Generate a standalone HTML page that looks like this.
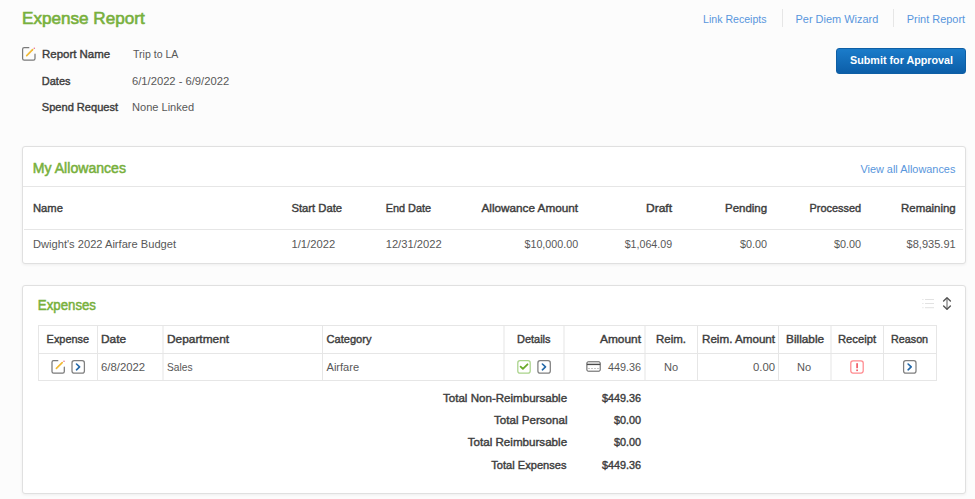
<!DOCTYPE html>
<html><head><meta charset="utf-8">
<style>
html,body{margin:0;padding:0;}
body{width:975px;height:499px;background:#fcfcfc;position:relative;overflow:hidden;font-family:"Liberation Sans",sans-serif;}
.card{position:absolute;background:#fff;border:1px solid #e0e0e0;border-radius:3px;box-shadow:0 1px 3px rgba(0,0,0,0.06);box-sizing:border-box;}
.btn{position:absolute;left:836px;top:48px;width:130px;height:26px;border-radius:3px;background:linear-gradient(#1b7cca,#0c5ea8);box-sizing:border-box;border:1px solid #0e5fa5;}
svg.ov{position:absolute;left:0;top:0;}
svg text{font-family:"Liberation Sans",sans-serif;}
</style></head>
<body>
<div class="card" style="left:22px;top:146px;width:944px;height:118px;"></div>
<div class="card" style="left:22px;top:285px;width:944px;height:209px;"></div>
<div class="btn"></div>
<svg class="ov" width="975" height="499" viewBox="0 0 975 499">
<!-- separators top links -->
<rect x="782" y="9" width="1" height="18" fill="#e6e6e6"/>
<rect x="893" y="9" width="1" height="18" fill="#e6e6e6"/>
<!-- allowances card lines -->
<rect x="23" y="186" width="942" height="1" fill="#e6e6e6"/>
<rect x="24" y="229" width="939" height="1" fill="#e6e6e6"/>
<!-- expenses table -->
<g fill="#e6e6e6">
<rect x="38" y="325" width="899" height="1"/>
<rect x="38" y="353" width="899" height="1"/>
<rect x="38" y="380" width="899" height="1"/>
<rect x="38" y="325" width="1" height="56"/>
<rect x="97" y="325" width="1" height="56"/>
<rect x="162.5" y="325" width="1" height="56"/>
<rect x="322" y="325" width="1" height="56"/>
<rect x="503.5" y="325" width="1" height="56"/>
<rect x="563.5" y="325" width="1" height="56"/>
<rect x="644.5" y="325" width="1" height="56"/>
<rect x="697" y="325" width="1" height="56"/>
<rect x="778" y="325" width="1" height="56"/>
<rect x="830.5" y="325" width="1" height="56"/>
<rect x="883" y="325" width="1" height="56"/>
<rect x="936" y="325" width="1" height="56"/>
</g>

<!-- edit icon top -->
<g fill="none" stroke-linecap="round">
<path d="M28.8 47.7 H24.2 Q22.6 47.7 22.6 49.3 V58.5 Q22.6 60.1 24.2 60.1 H33.4 Q35 60.1 35 58.5 V54.2" stroke="#7a7a7a" stroke-width="1.25"/>
<path d="M26.7 55.6 L32.6 49.7" stroke="#f0b935" stroke-width="1.65"/>
<circle cx="34.3" cy="48.2" r="0.8" fill="#e8708a" stroke="none"/>
</g>
<!-- edit icon row -->
<g fill="none" stroke-linecap="round">
<path d="M57.8 360.7 H53.6 Q52 360.7 52 362.3 V371.5 Q52 373.1 53.6 373.1 H62.7 Q64.3 373.1 64.3 371.5 V367.2" stroke="#7a7a7a" stroke-width="1.25"/>
<path d="M56.4 368.4 L62.2 362.7" stroke="#f0b935" stroke-width="1.65"/>
<circle cx="64" cy="361.2" r="0.8" fill="#e8708a" stroke="none"/>
</g>
<!-- arrow boxes -->
<g fill="none">
<rect x="72" y="360.7" width="12.4" height="12.4" rx="2.2" stroke="#7f7f7f" stroke-width="1.25"/>
<path d="M76.5 364 L79.6 366.9 L76.5 369.8" stroke="#2468a8" stroke-width="1.65" stroke-linecap="round" stroke-linejoin="round"/>
<rect x="537.9" y="360.7" width="12.4" height="12.4" rx="2.2" stroke="#7f7f7f" stroke-width="1.25"/>
<path d="M542.4 364 L545.5 366.9 L542.4 369.8" stroke="#2468a8" stroke-width="1.65" stroke-linecap="round" stroke-linejoin="round"/>
<rect x="903.6" y="360.7" width="12.4" height="12.4" rx="2.2" stroke="#7f7f7f" stroke-width="1.25"/>
<path d="M908.1 364 L911.2 366.9 L908.1 369.8" stroke="#2468a8" stroke-width="1.65" stroke-linecap="round" stroke-linejoin="round"/>
</g>
<!-- checkbox -->
<rect x="517.8" y="360.7" width="12.4" height="12.4" rx="2.2" fill="none" stroke="#a9d38a" stroke-width="1.25"/>
<path d="M520.6 366.6 L522.9 368.9 L527.5 364.3" fill="none" stroke="#6aab2a" stroke-width="1.8" stroke-linecap="round" stroke-linejoin="round"/>
<!-- card icon -->
<rect x="586.9" y="361.8" width="13.3" height="9.4" rx="1.2" fill="none" stroke="#5a5a5a" stroke-width="1"/>
<rect x="586.9" y="363.7" width="13.3" height="1.4" fill="#4a4a4a"/>
<g fill="#8a8a8a"><rect x="588.5" y="368" width="1" height="1"/><rect x="591.5" y="368" width="1" height="1"/><rect x="594.5" y="368" width="1" height="1"/><rect x="597.5" y="368" width="1" height="1"/></g>
<!-- receipt -->
<rect x="850.8" y="360.8" width="12.4" height="12.2" rx="2.2" fill="none" stroke="#ff8a8f" stroke-width="1.25"/>
<rect x="856.3" y="363.2" width="1.6" height="5" fill="#f0505c"/>
<rect x="856.3" y="369.5" width="1.6" height="1.6" fill="#f0505c"/>
<!-- list icon -->
<g fill="#e2e2e2">
<rect x="922.3" y="299" width="1.2" height="1"/><rect x="925" y="299" width="9" height="1"/>
<rect x="922.3" y="303" width="1.2" height="1"/><rect x="925" y="303" width="9" height="1"/>
<rect x="922.3" y="307.2" width="1.2" height="1"/><rect x="925" y="307.2" width="9" height="1"/>
</g>
<!-- sort icon -->
<g fill="none" stroke="#555" stroke-linecap="round" stroke-linejoin="round">
<path d="M947 298.3 V309" stroke-width="1.1" stroke="#6a6a6a"/>
<path d="M943.6 301 L947 297.8 L950.4 301" stroke-width="1.4"/>
<path d="M943.6 306 L947 309.3 L950.4 306" stroke-width="1.4"/>
</g>
<text x="21.99" y="24.00" font-size="17" fill="#78b03c" stroke="#78b03c" stroke-width="0.62" textLength="122.73" lengthAdjust="spacingAndGlyphs">Expense Report</text>
<text x="703.00" y="23.00" font-size="11.2" fill="#5896dc" textLength="63.62" lengthAdjust="spacingAndGlyphs">Link Receipts</text>
<text x="795.50" y="23.00" font-size="11.2" fill="#5896dc" textLength="82.72" lengthAdjust="spacingAndGlyphs">Per Diem Wizard</text>
<text x="906.70" y="23.00" font-size="11.2" fill="#5896dc" textLength="58.43" lengthAdjust="spacingAndGlyphs">Print Report</text>
<text x="850.00" y="64.00" font-size="11.2" fill="#ffffff" font-weight="bold" textLength="103.10" lengthAdjust="spacingAndGlyphs">Submit for Approval</text>
<text x="42.00" y="57.60" font-size="11" fill="#3d3d3d" stroke="#3d3d3d" stroke-width="0.40" textLength="68.12" lengthAdjust="spacingAndGlyphs">Report Name</text>
<text x="133.00" y="57.60" font-size="11" fill="#585858" textLength="45.36" lengthAdjust="spacingAndGlyphs">Trip to LA</text>
<text x="41.80" y="84.60" font-size="11" fill="#3d3d3d" stroke="#3d3d3d" stroke-width="0.40" textLength="28.70" lengthAdjust="spacingAndGlyphs">Dates</text>
<text x="132.00" y="84.60" font-size="11" fill="#585858" textLength="97.12" lengthAdjust="spacingAndGlyphs">6/1/2022 - 6/9/2022</text>
<text x="41.80" y="111.00" font-size="11" fill="#3d3d3d" stroke="#3d3d3d" stroke-width="0.40" textLength="76.26" lengthAdjust="spacingAndGlyphs">Spend Request</text>
<text x="132.00" y="111.00" font-size="11" fill="#585858" textLength="62.12" lengthAdjust="spacingAndGlyphs">None Linked</text>
<text x="32.80" y="173.00" font-size="14" fill="#78b03c" stroke="#78b03c" stroke-width="0.51" textLength="93.20" lengthAdjust="spacingAndGlyphs">My Allowances</text>
<text x="860.40" y="172.60" font-size="11.2" fill="#5896dc" textLength="95.01" lengthAdjust="spacingAndGlyphs">View all Allowances</text>
<text x="33.00" y="212.00" font-size="11" fill="#3d3d3d" stroke="#3d3d3d" stroke-width="0.40" textLength="29.92" lengthAdjust="spacingAndGlyphs">Name</text>
<text x="291.50" y="212.00" font-size="11" fill="#3d3d3d" stroke="#3d3d3d" stroke-width="0.40" textLength="50.62" lengthAdjust="spacingAndGlyphs">Start Date</text>
<text x="385.70" y="212.00" font-size="11" fill="#3d3d3d" stroke="#3d3d3d" stroke-width="0.40" textLength="45.42" lengthAdjust="spacingAndGlyphs">End Date</text>
<text x="481.50" y="212.00" font-size="11" fill="#3d3d3d" stroke="#3d3d3d" stroke-width="0.40" textLength="96.56" lengthAdjust="spacingAndGlyphs">Allowance Amount</text>
<text x="646.00" y="212.00" font-size="11" fill="#3d3d3d" stroke="#3d3d3d" stroke-width="0.40" textLength="26.06" lengthAdjust="spacingAndGlyphs">Draft</text>
<text x="725.00" y="212.00" font-size="11" fill="#3d3d3d" stroke="#3d3d3d" stroke-width="0.40" textLength="42.12" lengthAdjust="spacingAndGlyphs">Pending</text>
<text x="809.50" y="212.00" font-size="11" fill="#3d3d3d" stroke="#3d3d3d" stroke-width="0.40" textLength="51.62" lengthAdjust="spacingAndGlyphs">Processed</text>
<text x="901.00" y="212.00" font-size="11" fill="#3d3d3d" stroke="#3d3d3d" stroke-width="0.40" textLength="54.72" lengthAdjust="spacingAndGlyphs">Remaining</text>
<text x="33.00" y="248.00" font-size="11" fill="#585858" textLength="143.06" lengthAdjust="spacingAndGlyphs">Dwight&#39;s 2022 Airfare Budget</text>
<text x="291.50" y="248.00" font-size="11" fill="#585858" textLength="43.62" lengthAdjust="spacingAndGlyphs">1/1/2022</text>
<text x="385.70" y="248.00" font-size="11" fill="#585858" textLength="55.92" lengthAdjust="spacingAndGlyphs">12/31/2022</text>
<text x="524.50" y="248.00" font-size="11" fill="#585858" textLength="53.61" lengthAdjust="spacingAndGlyphs">$10,000.00</text>
<text x="624.70" y="248.00" font-size="11" fill="#585858" textLength="47.41" lengthAdjust="spacingAndGlyphs">$1,064.09</text>
<text x="740.00" y="248.00" font-size="11" fill="#585858" textLength="27.12" lengthAdjust="spacingAndGlyphs">$0.00</text>
<text x="834.00" y="248.00" font-size="11" fill="#585858" textLength="27.12" lengthAdjust="spacingAndGlyphs">$0.00</text>
<text x="906.60" y="248.00" font-size="11" fill="#585858" textLength="49.12" lengthAdjust="spacingAndGlyphs">$8,935.91</text>
<text x="37.85" y="310.00" font-size="14" fill="#78b03c" stroke="#78b03c" stroke-width="0.51" textLength="58.15" lengthAdjust="spacingAndGlyphs">Expenses</text>
<text x="46.60" y="343.00" font-size="11" fill="#3d3d3d" stroke="#3d3d3d" stroke-width="0.40" textLength="42.52" lengthAdjust="spacingAndGlyphs">Expense</text>
<text x="101.00" y="343.00" font-size="11" fill="#3d3d3d" stroke="#3d3d3d" stroke-width="0.40" textLength="25.13" lengthAdjust="spacingAndGlyphs">Date</text>
<text x="167.00" y="343.00" font-size="11" fill="#3d3d3d" stroke="#3d3d3d" stroke-width="0.40" textLength="62.06" lengthAdjust="spacingAndGlyphs">Department</text>
<text x="326.50" y="343.00" font-size="11" fill="#3d3d3d" stroke="#3d3d3d" stroke-width="0.40" textLength="45.00" lengthAdjust="spacingAndGlyphs">Category</text>
<text x="517.00" y="343.00" font-size="11" fill="#3d3d3d" stroke="#3d3d3d" stroke-width="0.40" textLength="33.50" lengthAdjust="spacingAndGlyphs">Details</text>
<text x="600.00" y="343.00" font-size="11" fill="#3d3d3d" stroke="#3d3d3d" stroke-width="0.40" textLength="41.06" lengthAdjust="spacingAndGlyphs">Amount</text>
<text x="656.00" y="343.00" font-size="11" fill="#3d3d3d" stroke="#3d3d3d" stroke-width="0.40" textLength="30.06" lengthAdjust="spacingAndGlyphs">Reim.</text>
<text x="702.00" y="343.00" font-size="11" fill="#3d3d3d" stroke="#3d3d3d" stroke-width="0.40" textLength="73.06" lengthAdjust="spacingAndGlyphs">Reim. Amount</text>
<text x="786.00" y="343.00" font-size="11" fill="#3d3d3d" stroke="#3d3d3d" stroke-width="0.40" textLength="38.13" lengthAdjust="spacingAndGlyphs">Billable</text>
<text x="838.00" y="343.00" font-size="11" fill="#3d3d3d" stroke="#3d3d3d" stroke-width="0.40" textLength="38.06" lengthAdjust="spacingAndGlyphs">Receipt</text>
<text x="891.00" y="343.00" font-size="11" fill="#3d3d3d" stroke="#3d3d3d" stroke-width="0.40" textLength="37.12" lengthAdjust="spacingAndGlyphs">Reason</text>
<text x="101.00" y="371.00" font-size="11" fill="#585858" textLength="44.12" lengthAdjust="spacingAndGlyphs">6/8/2022</text>
<text x="167.00" y="371.00" font-size="11" fill="#585858" textLength="25.54" lengthAdjust="spacingAndGlyphs">Sales</text>
<text x="326.50" y="371.00" font-size="11" fill="#585858" textLength="32.62" lengthAdjust="spacingAndGlyphs">Airfare</text>
<text x="608.00" y="371.00" font-size="11" fill="#585858" textLength="33.12" lengthAdjust="spacingAndGlyphs">449.36</text>
<text x="664.00" y="371.00" font-size="11" fill="#585858" textLength="14.12" lengthAdjust="spacingAndGlyphs">No</text>
<text x="753.00" y="371.00" font-size="11" fill="#585858" textLength="22.12" lengthAdjust="spacingAndGlyphs">0.00</text>
<text x="797.00" y="371.00" font-size="11" fill="#585858" textLength="14.12" lengthAdjust="spacingAndGlyphs">No</text>
<text x="443.00" y="402.00" font-size="11" fill="#3d3d3d" stroke="#3d3d3d" stroke-width="0.40" textLength="124.12" lengthAdjust="spacingAndGlyphs">Total Non-Reimbursable</text>
<text x="602.00" y="402.00" font-size="11" fill="#3d3d3d" stroke="#3d3d3d" stroke-width="0.40" textLength="39.12" lengthAdjust="spacingAndGlyphs">$449.36</text>
<text x="494.00" y="424.20" font-size="11" fill="#3d3d3d" stroke="#3d3d3d" stroke-width="0.40" textLength="73.47" lengthAdjust="spacingAndGlyphs">Total Personal</text>
<text x="614.00" y="424.20" font-size="11" fill="#3d3d3d" stroke="#3d3d3d" stroke-width="0.40" textLength="27.12" lengthAdjust="spacingAndGlyphs">$0.00</text>
<text x="467.70" y="446.40" font-size="11" fill="#3d3d3d" stroke="#3d3d3d" stroke-width="0.40" textLength="99.42" lengthAdjust="spacingAndGlyphs">Total Reimbursable</text>
<text x="614.00" y="446.40" font-size="11" fill="#3d3d3d" stroke="#3d3d3d" stroke-width="0.40" textLength="27.12" lengthAdjust="spacingAndGlyphs">$0.00</text>
<text x="491.30" y="468.60" font-size="11" fill="#3d3d3d" stroke="#3d3d3d" stroke-width="0.40" textLength="75.20" lengthAdjust="spacingAndGlyphs">Total Expenses</text>
<text x="602.00" y="468.60" font-size="11" fill="#3d3d3d" stroke="#3d3d3d" stroke-width="0.40" textLength="39.12" lengthAdjust="spacingAndGlyphs">$449.36</text>
</svg>
</body></html>
